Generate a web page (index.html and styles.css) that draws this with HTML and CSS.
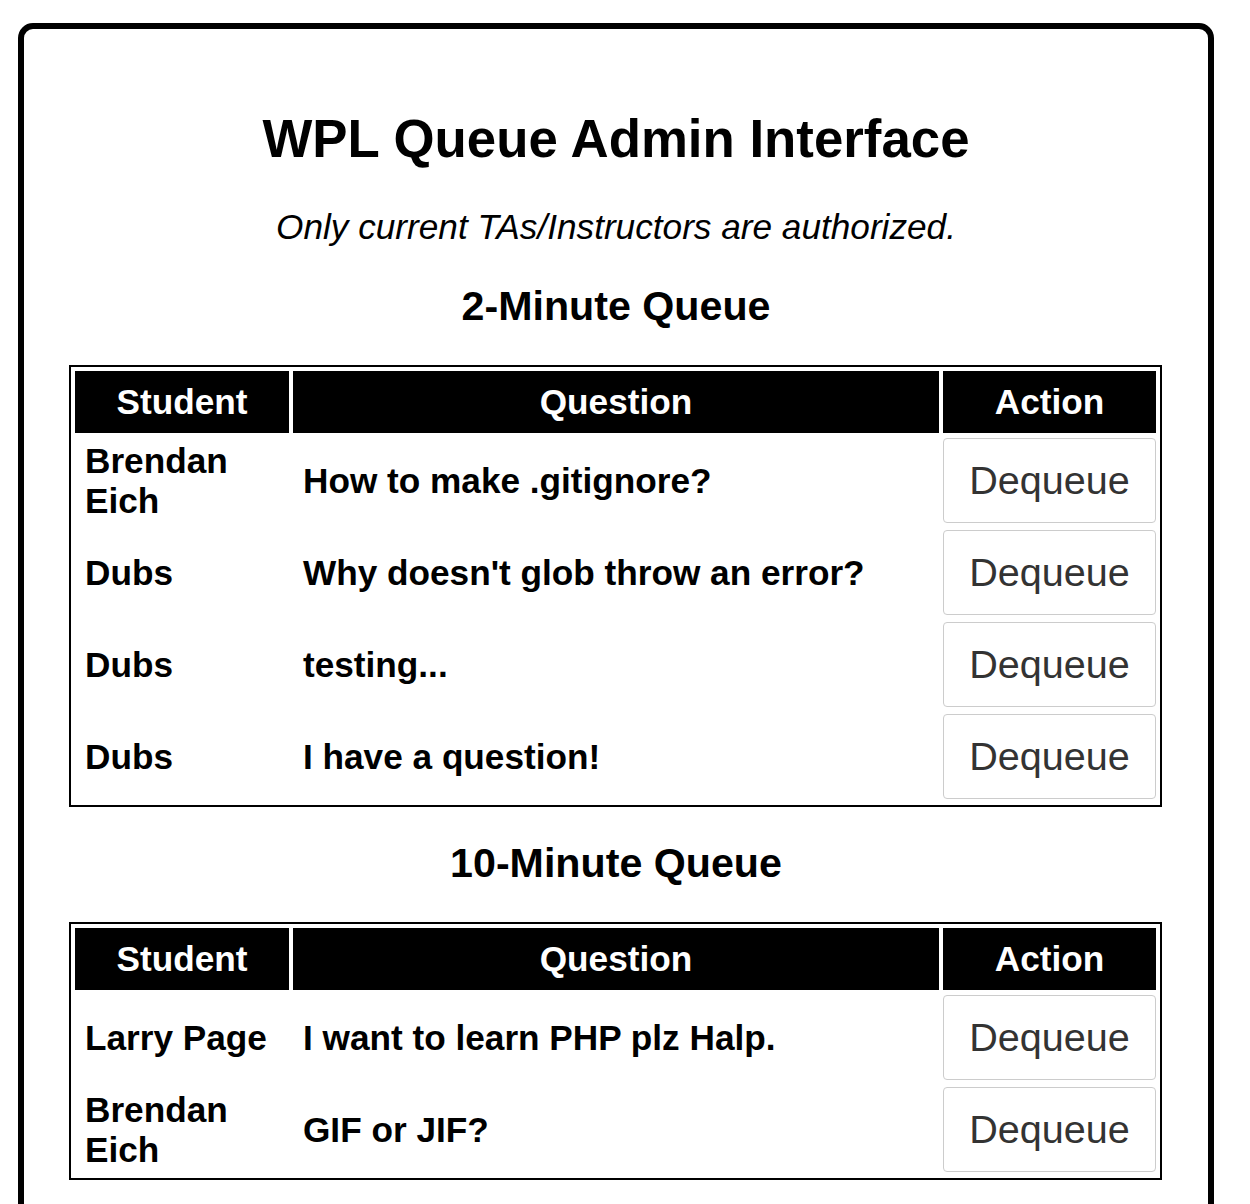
FILE: index.html
```html
<!DOCTYPE html>
<html>
<head>
<meta charset="utf-8">
<title>WPL Queue Admin Interface</title>
<link rel="stylesheet" href="styles.css">
</head>
<body>
<div class="panel">
  <h1 class="title">WPL Queue Admin Interface</h1>
  <p class="note">Only current TAs/Instructors are authorized.</p>

  <h3 class="queue-title">2-Minute Queue</h3>
  <table class="queue">
    <colgroup><col class="c-student"><col class="c-question"><col class="c-action"></colgroup>
    <thead>
      <tr><th>Student</th><th>Question</th><th>Action</th></tr>
    </thead>
    <tbody>
      <tr><td>Brendan Eich</td><td>How to make .gitignore?</td><td class="action"><button class="btn">Dequeue</button></td></tr>
      <tr><td>Dubs</td><td>Why doesn't glob throw an error?</td><td class="action"><button class="btn">Dequeue</button></td></tr>
      <tr><td>Dubs</td><td>testing...</td><td class="action"><button class="btn">Dequeue</button></td></tr>
      <tr><td>Dubs</td><td>I have a question!</td><td class="action"><button class="btn">Dequeue</button></td></tr>
    </tbody>
  </table>

  <h3 class="queue-title">10-Minute Queue</h3>
  <table class="queue">
    <colgroup><col class="c-student"><col class="c-question"><col class="c-action"></colgroup>
    <thead>
      <tr><th>Student</th><th>Question</th><th>Action</th></tr>
    </thead>
    <tbody>
      <tr><td>Larry Page</td><td>I want to learn PHP plz Halp.</td><td class="action"><button class="btn">Dequeue</button></td></tr>
      <tr><td>Brendan Eich</td><td>GIF or JIF?</td><td class="action"><button class="btn">Dequeue</button></td></tr>
    </tbody>
  </table>
</div>
</body>
</html>
```

FILE: styles.css
```css
html, body {
  margin: 0;
  padding: 0;
  background: #fff;
}

body {
  font-family: "Liberation Sans", Arial, Helvetica, sans-serif;
  font-size: 35.2px;
  color: #000;
}

.panel {
  box-sizing: border-box;
  width: 1196px;
  margin: 23px 0 0 18px;
  border: 6px solid #000;
  border-radius: 15px;
  padding: 79px 45px 60px 45px;
  min-height: 1300px;
}

.title {
  margin: 0 0 38px 0;
  font-size: 52.8px;
  font-weight: bold;
  text-align: center;
  line-height: normal;
}

.note {
  margin: 0 0 36px 0;
  font-style: italic;
  text-align: center;
  line-height: normal;
}

.queue-title {
  margin: 0 0 35px 0;
  font-size: 41.2px;
  font-weight: bold;
  text-align: center;
  line-height: normal;
}

.queue {
  width: 1093px;
  table-layout: fixed;
  border: 2px solid #000;
  border-spacing: 4px;
  margin: 0 0 33px 0;
}

.c-student { width: 214px; }
.c-question { width: 646px; }
.c-action { width: 213px; }

.queue th {
  background: #000;
  color: #fff;
  font-weight: bold;
  text-align: center;
  padding: 11px 0;
  height: 40px;
  line-height: 40px;
}

.queue td {
  font-weight: bold;
  text-align: left;
  vertical-align: middle;
  padding: 0 10px;
  height: 88px;
  box-sizing: border-box;
  line-height: 40px;
}

.queue td.action {
  padding: 1px 0 2px 0;
}

.btn {
  display: block;
  box-sizing: border-box;
  width: 100%;
  height: 85px;
  margin: 0;
  padding: 0;
  background: #fff;
  border: 1px solid #ccc;
  border-radius: 4px;
  color: #333;
  font-family: "Liberation Sans", Arial, Helvetica, sans-serif;
  font-size: 39.6px;
  font-weight: normal;
  line-height: 1;
}
```
